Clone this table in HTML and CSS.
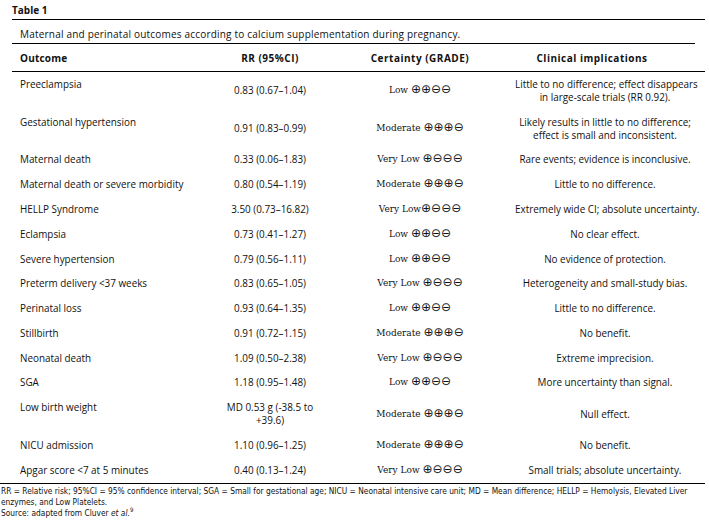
FILE: index.html
```html
<!DOCTYPE html>
<html lang="en">
<head>
<meta charset="utf-8">
<title>Table 1</title>
<link rel="stylesheet" href="styles.css">
</head>
<body>
<div class="page">
  <h1 class="title">Table 1</h1>
  <div class="frame">
    <p class="caption">Maternal and perinatal outcomes according to calcium supplementation during pregnancy.</p>
    <table class="outcomes">
      <thead>
        <tr>
          <th class="c-out">Outcome</th>
          <th class="c-rr">RR (95%CI)</th>
          <th class="c-gr">Certainty (GRADE)</th>
          <th class="c-cl">Clinical implications</th>
        </tr>
      </thead>
      <tbody>
        <tr><td class="c-out">Preeclampsia</td><td class="c-rr">0.83 (0.67–1.04)</td><td class="c-gr">Low <span class="sym">⊕⊕⊖⊖</span></td><td class="c-cl">Little to no difference; effect disappears<br>in large-scale trials (RR 0.92).</td></tr>
        <tr><td class="c-out">Gestational hypertension</td><td class="c-rr">0.91 (0.83–0.99)</td><td class="c-gr">Moderate <span class="sym">⊕⊕⊕⊖</span></td><td class="c-cl">Likely results in little to no difference;<br>effect is small and inconsistent.</td></tr>
        <tr><td class="c-out">Maternal death</td><td class="c-rr">0.33 (0.06–1.83)</td><td class="c-gr">Very Low <span class="sym">⊕⊖⊖⊖</span></td><td class="c-cl">Rare events; evidence is inconclusive.</td></tr>
        <tr><td class="c-out">Maternal death or severe morbidity</td><td class="c-rr">0.80 (0.54–1.19)</td><td class="c-gr">Moderate <span class="sym">⊕⊕⊕⊖</span></td><td class="c-cl">Little to no difference.</td></tr>
        <tr><td class="c-out">HELLP Syndrome</td><td class="c-rr">3.50 (0.73–16.82)</td><td class="c-gr">Very Low<span class="sym">⊕⊖⊖⊖</span></td><td class="c-cl">Extremely wide CI; absolute uncertainty.</td></tr>
        <tr><td class="c-out">Eclampsia</td><td class="c-rr">0.73 (0.41–1.27)</td><td class="c-gr">Low <span class="sym">⊕⊕⊖⊖</span></td><td class="c-cl">No clear effect.</td></tr>
        <tr><td class="c-out">Severe hypertension</td><td class="c-rr">0.79 (0.56–1.11)</td><td class="c-gr">Low <span class="sym">⊕⊕⊖⊖</span></td><td class="c-cl">No evidence of protection.</td></tr>
        <tr><td class="c-out">Preterm delivery &lt;37 weeks</td><td class="c-rr">0.83 (0.65–1.05)</td><td class="c-gr">Very Low <span class="sym">⊕⊖⊖⊖</span></td><td class="c-cl">Heterogeneity and small-study bias.</td></tr>
        <tr><td class="c-out">Perinatal loss</td><td class="c-rr">0.93 (0.64–1.35)</td><td class="c-gr">Low <span class="sym">⊕⊕⊖⊖</span></td><td class="c-cl">Little to no difference.</td></tr>
        <tr><td class="c-out">Stillbirth</td><td class="c-rr">0.91 (0.72–1.15)</td><td class="c-gr">Moderate <span class="sym">⊕⊕⊕⊖</span></td><td class="c-cl">No benefit.</td></tr>
        <tr><td class="c-out">Neonatal death</td><td class="c-rr">1.09 (0.50–2.38)</td><td class="c-gr">Very Low <span class="sym">⊕⊖⊖⊖</span></td><td class="c-cl">Extreme imprecision.</td></tr>
        <tr><td class="c-out">SGA</td><td class="c-rr">1.18 (0.95–1.48)</td><td class="c-gr">Low <span class="sym">⊕⊕⊖⊖</span></td><td class="c-cl">More uncertainty than signal.</td></tr>
        <tr><td class="c-out">Low birth weight</td><td class="c-rr">MD 0.53 g (-38.5 to<br>+39.6)</td><td class="c-gr">Moderate <span class="sym">⊕⊕⊕⊖</span></td><td class="c-cl">Null effect.</td></tr>
        <tr><td class="c-out">NICU admission</td><td class="c-rr">1.10 (0.96–1.25)</td><td class="c-gr">Moderate <span class="sym">⊕⊕⊕⊖</span></td><td class="c-cl">No benefit.</td></tr>
        <tr><td class="c-out">Apgar score &lt;7 at 5 minutes</td><td class="c-rr">0.40 (0.13–1.24)</td><td class="c-gr">Very Low <span class="sym">⊕⊖⊖⊖</span></td><td class="c-cl">Small trials; absolute uncertainty.</td></tr>
      </tbody>
    </table>
  </div>
  <div class="notes">
    <p class="defs">RR = Relative risk; 95%CI = 95% confidence interval; SGA = Small for gestational age; NICU = Neonatal intensive care unit; MD = Mean difference; HELLP = Hemolysis, Elevated Liver<br>enzymes, and Low Platelets.</p>
    <p>Source: adapted from Cluver <i>et al.</i><sup>9</sup></p>
  </div>
</div>
</body>
</html>
```

FILE: styles.css
```css
* { box-sizing: border-box; }

html, body {
  margin: 0;
  padding: 0;
  background: #ffffff;
}

body {
  font-family: "Open Sans", "Noto Sans", sans-serif;
  font-size: 9.9px;
  color: #111111;
  width: 709px;
}

.title {
  margin: 0 0 0 12px;
  padding: 4px 0 3px;
  font-size: 10px;
  line-height: 12px;
  font-weight: 700;
}

.frame {
  margin-left: 12px;
  width: 693px;
  border-top: 1px solid #000;
}

.caption {
  margin: 0 10px 0 0;
  padding: 8px 0 2px 8px;
  font-size: 10px;
  letter-spacing: 0.2px;
  line-height: 13px;
  border-bottom: 1px solid #000;
}

.outcomes {
  width: 693px;
  border-collapse: collapse;
  table-layout: fixed;
}

.outcomes th,
.outcomes td {
  padding: 5.9px 0;
  line-height: 13px;
  vertical-align: middle;
  text-align: center;
  font-weight: 400;
  white-space: nowrap;
}

.outcomes thead th {
  padding: 8px 0 6px;
  font-weight: 700;
  font-size: 10px;
  letter-spacing: 0.5px;
  border-bottom: 1px solid #000;
}

.outcomes thead .c-out { letter-spacing: 0.2px; }

.outcomes .c-out {
  width: 203px;
  text-align: left;
  padding-left: 8px;
  vertical-align: top;
}

.outcomes .c-rr { width: 110px; }

.outcomes .c-gr {
  width: 190px;
  font-family: "DejaVu Serif", "Liberation Serif", serif;
  font-size: 9px;
}

.outcomes thead .c-gr {
  font-family: "Open Sans", "Noto Sans", sans-serif;
  font-size: 10px;
}

.outcomes .c-cl {
  width: 190px;
  padding-right: 10px;
}

.outcomes thead .c-cl { padding-right: 36px; }

.sym {
  font-family: "DejaVu Sans", sans-serif;
  font-size: 12px;
  line-height: 0;
}

.notes {
  border-top: 1px solid #000;
  width: 705px;
  padding-top: 2px;
  font-family: "DejaVu Sans Condensed", "DejaVu Sans", sans-serif;
  font-stretch: condensed;
  font-size: 8.3px;
  line-height: 11px;
}

.notes p {
  margin: 0 0 0 1px;
}

.notes .defs { white-space: nowrap; }

.notes sup {
  font-size: 6px;
  line-height: 0;
  vertical-align: 4px;
}
```
